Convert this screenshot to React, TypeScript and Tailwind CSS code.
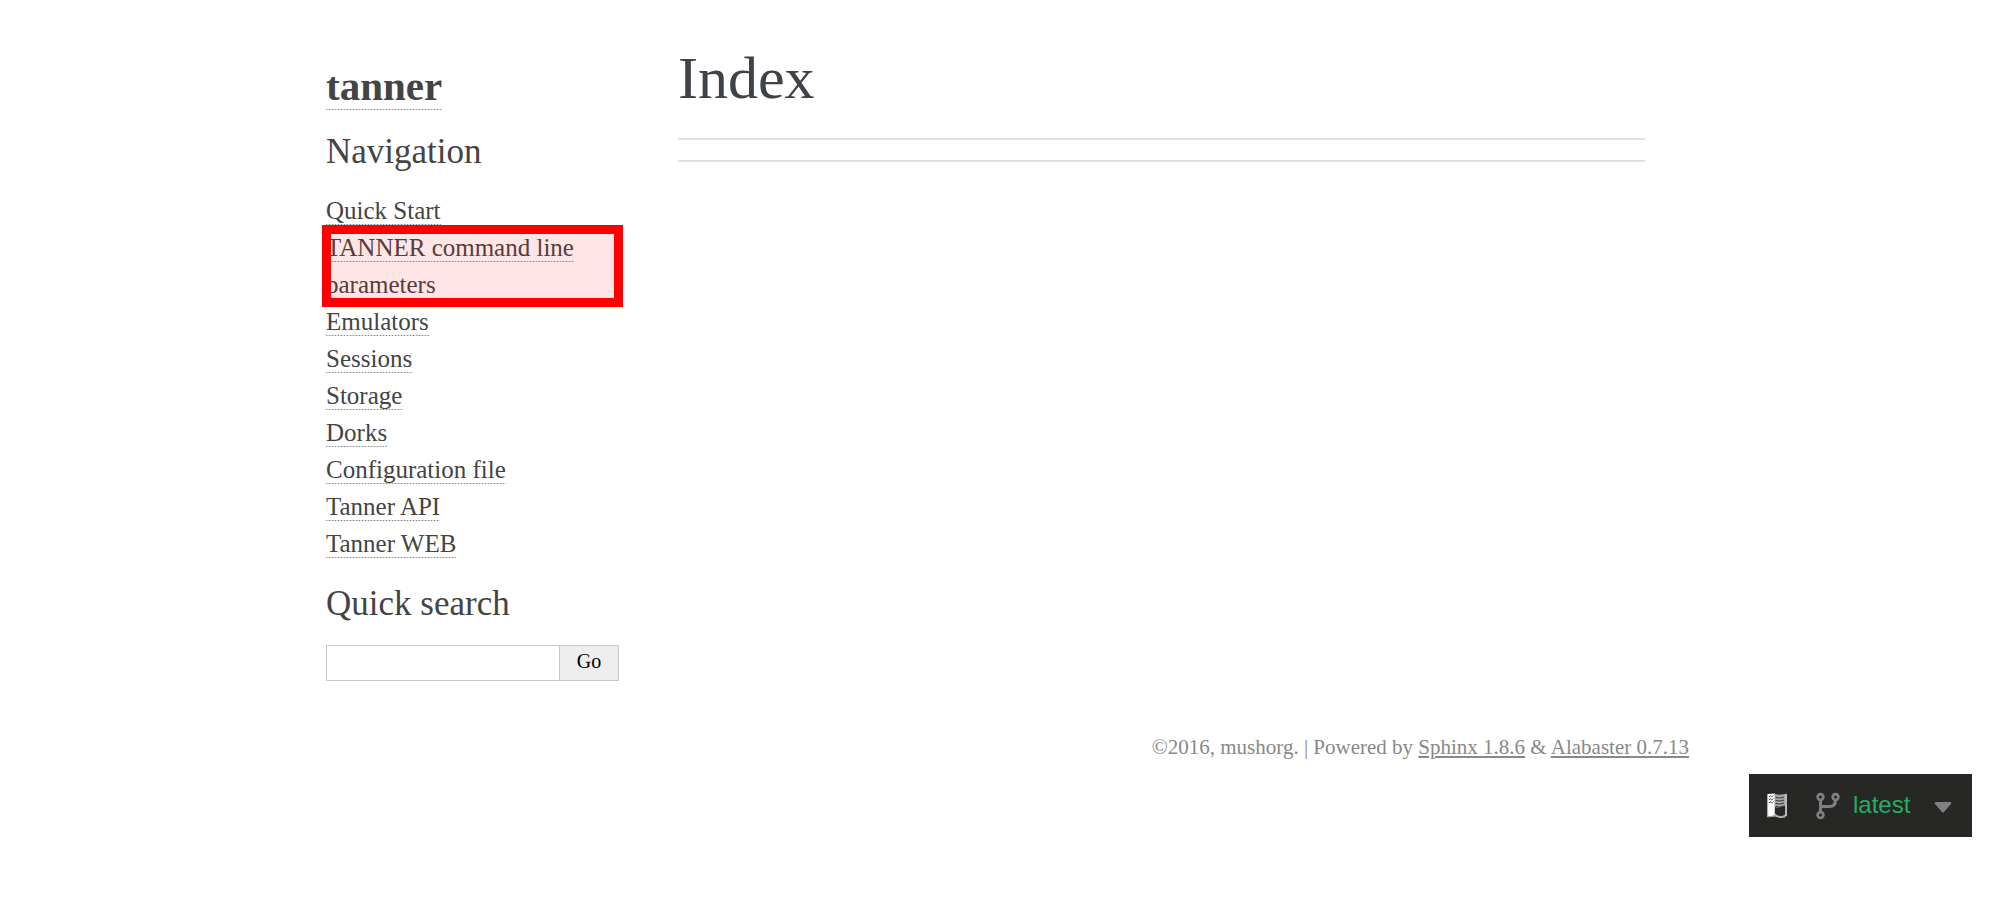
import React from "react";

const LINK_LINE =
  "bg-[linear-gradient(90deg,#888888_50%,#d8d8d8_50%)] bg-[length:3px_1px] bg-bottom-left bg-repeat-x pb-px";

const pages = [
  "Quick Start",
  "TANNER command line parameters",
  "Emulators",
  "Sessions",
  "Storage",
  "Dorks",
  "Configuration file",
  "Tanner API",
  "Tanner WEB",
];

function BookIcon() {
  return (
    <svg viewBox="0 0 20 25" className="h-[25px] w-5" aria-hidden="true">
      <path d="M0.500 1 L8 0.500 V22.500 L0.500 23.500 Z" fill="#ffffff" />
      <path d="M7.500 1 Q14 2.500 20 0.500 V23 Q14 26 7.500 23 Z" fill="#a8a8a8" />
      <path d="M8 14 Q12 15.500 18 12.500 V21.500 Q13 25 8 20.500 Z" fill="#272725" />
      <path d="M8.500 4 Q12 6 17 4 M8.500 7 Q12 9 17 7 M8.500 10 Q12 12 17 10 M8.500 13 Q12 15 17 13" fill="none" stroke="#3a3a38" strokeWidth="1.200" />
      <path d="M19 1.500 V23" stroke="#c5c5c5" strokeWidth="1.200" />
      <path d="M2 4 L3.500 2.500 L4.500 4 L6.500 2.500 M2 7 L3.500 5.500 L4.500 7 L6.500 5.500 M2 10 L3.500 8.500 L4.500 10 L6.500 8.500" fill="none" stroke="#555555" strokeWidth="1" />
      <path d="M0.700 2 V24 L8 23 Q13 25.500 18 24" fill="none" stroke="#b5b5b3" strokeWidth="1" />
    </svg>
  );
}

function BranchIcon() {
  return (
    <svg viewBox="0 0 24 28" className="h-7 w-6" fill="none" stroke="#808080" strokeWidth="2.600" aria-hidden="true">
      <circle cx="4.500" cy="5" r="2.900" />
      <circle cx="4.500" cy="23" r="2.900" />
      <circle cx="19.500" cy="5" r="2.900" />
      <path d="M4.500 8 V20 M4.500 14.500 H13.500 C17.500 14.500 19.500 12 19.500 8" strokeWidth="3" />
    </svg>
  );
}

export default function App() {
  return (
    <div className="bg-white font-['Liberation_Serif',serif] text-[#3e4349]">
      <div className="mx-auto flex max-w-[1378px] pt-[43px]">
        <aside className="w-[323px] shrink-0 pt-[19px] pr-[15px] pl-[15px] text-[25px] leading-[37px] text-[#444444]">
          <h1 className="text-[41px] leading-[48px] font-bold">
            <a href="#" className={LINK_LINE}>tanner</a>
          </h1>
          <h3 className="mt-[21px] text-[35px] leading-[42px]">Navigation</h3>
          <ul className="mt-[19px]">
            {pages.map((page, i) => (
              <li key={page} className="relative">
                <a href="#" className={LINK_LINE}>{page}</a>
                {i === 1 && (
                  <span className="pointer-events-none absolute -inset-x-1 -top-1 -bottom-1 border-[9px] border-[#ff0000] bg-[#ff0000]/10" />
                )}
              </li>
            ))}
          </ul>
          <h3 className="mt-[21px] text-[35px] leading-[42px]">
            <label htmlFor="search">Quick search</label>
          </h3>
          <form className="mt-5 flex h-9" onSubmit={(e) => e.preventDefault()}>
            <input id="search" type="text" className="min-w-0 flex-1 border border-r-0 border-[#c8c8c8] px-2 text-[20px] outline-none" />
            <button type="submit" className="w-[60px] border border-[#c8c8c8] bg-[#eeeeee] pb-1 text-[20px] leading-7 text-black">
              Go
            </button>
          </form>
        </aside>
        <main className="min-w-0 flex-1 px-11">
          <h1 className="text-[60px] leading-[70px]">Index</h1>
          <hr className="mt-[25px] h-[2px] border-t border-b border-t-[#dedede] border-b-[#e4e4e4]" />
          <hr className="mt-5 h-[2px] border-t border-b border-t-[#dedede] border-b-[#e4e4e4]" />
        </main>
      </div>
      <footer className="mx-auto mt-[51px] max-w-[1378px] text-right text-[21px] leading-[30px] text-[#888888]">
        ©2016, mushorg. | Powered by <a href="#" className="underline">Sphinx 1.8.6</a> &amp;{" "}
        <a href="#" className="underline">Alabaster 0.7.13</a>
      </footer>
      <button
        type="button"
        aria-label="Version: latest"
        className="fixed right-7 bottom-[72px] flex h-[63px] w-[223px] items-center bg-[#272725] pl-[18px] font-['Liberation_Sans',sans-serif] text-[24px] text-[#27ae60]"
      >
        <BookIcon />
        <span className="ml-[29px]"><BranchIcon /></span>
        <span className="ml-[13px] pb-[2px]">latest</span>
        <svg viewBox="0 0 18 11" className="mt-1 ml-6 h-[11px] w-[18px]" fill="#808080" aria-hidden="true">
          <path d="M1.500 0 H16.500 Q18 .5 17 2 L10 10 Q9 11 8 10 L1 2 Q0 .5 1.500 0Z" />
        </svg>
      </button>
    </div>
  );
}
